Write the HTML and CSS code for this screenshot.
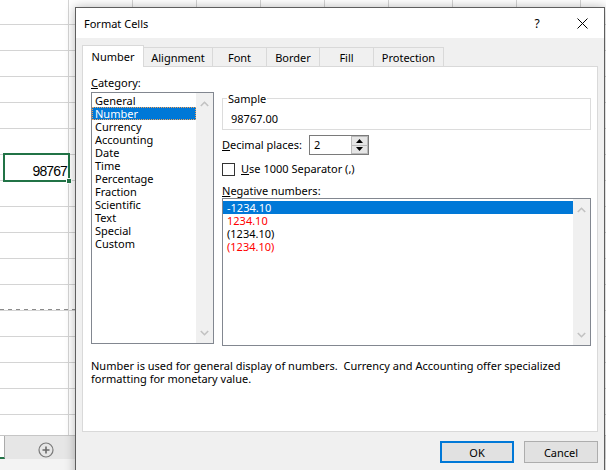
FILE: index.html
```html
<!DOCTYPE html>
<html>
<head>
<meta charset="utf-8">
<title>Format Cells</title>
<link rel="stylesheet" href="styles.css">
</head>
<body>
<div class="sheet">
  <div class="grid">
    <div class="cell-selected"><span>98767</span><i class="fill-handle"></i></div>
    <div class="page-break"></div>
  </div>
  <div class="sheet-tabs">
    <div class="sheet-tab-active"></div>
    <div class="add-sheet">
      <svg width="16" height="16" viewBox="0 0 16 16"><circle cx="8" cy="8" r="7" fill="none" stroke="#7a7a7a" stroke-width="1.2"/><path d="M8 4.5v7M4.5 8h7" stroke="#6a6a6a" stroke-width="1.6"/></svg>
    </div>
  </div>
  <div class="statusbar"></div>
</div>

<div class="dialog">
  <div class="titlebar">
    <div class="title">Format Cells</div>
    <div class="tb-btn help">?</div>
    <div class="tb-btn close">
      <svg width="11" height="11" viewBox="0 0 11 11"><path d="M0.5 0.5L10.5 10.5M10.5 0.5L0.5 10.5" stroke="#000" stroke-width="1"/></svg>
    </div>
  </div>
  <div class="dlg-body">
    <div class="tabs">
      <div class="tab active t-number">Number</div>
      <div class="tab t-align">Alignment</div>
      <div class="tab t-font">Font</div>
      <div class="tab t-border">Border</div>
      <div class="tab t-fill">Fill</div>
      <div class="tab t-prot">Protection</div>
    </div>
    <div class="panel">
      <div class="panel-main">
        <div class="col-left">
          <div class="label"><u>C</u>ategory:</div>
          <div class="listbox cat-list">
            <div class="list-items">
              <div class="item">General</div>
              <div class="item sel">Number</div>
              <div class="item">Currency</div>
              <div class="item">Accounting</div>
              <div class="item">Date</div>
              <div class="item">Time</div>
              <div class="item">Percentage</div>
              <div class="item">Fraction</div>
              <div class="item">Scientific</div>
              <div class="item">Text</div>
              <div class="item">Special</div>
              <div class="item">Custom</div>
            </div>
            <div class="scrollbar">
              <svg width="9" height="6" viewBox="0 0 9 6"><path d="M0.8 5L4.5 1.3L8.2 5" fill="none" stroke="#c2c2c2" stroke-width="1.6"/></svg>
              <svg width="9" height="6" viewBox="0 0 9 6"><path d="M0.8 1L4.5 4.7L8.2 1" fill="none" stroke="#c2c2c2" stroke-width="1.6"/></svg>
            </div>
          </div>
        </div>
        <div class="col-right">
          <div class="group">
            <span class="group-label">Sample</span>
            <div class="sample-value">98767.00</div>
          </div>
          <div class="dec-row">
            <div class="dec-label"><u>D</u>ecimal places:</div>
            <div class="spin-input">
              <div class="spin-value">2</div>
              <div class="spin-btns">
                <div class="spin-btn"><svg width="7" height="4" viewBox="0 0 7 4"><path d="M3.5 0L7 4H0z" fill="#000"/></svg></div>
                <div class="spin-btn"><svg width="7" height="4" viewBox="0 0 7 4"><path d="M0 0H7L3.5 4z" fill="#000"/></svg></div>
              </div>
            </div>
          </div>
          <div class="check-row">
            <div class="checkbox"></div>
            <div class="check-label"><u>U</u>se 1000 Separator (,)</div>
          </div>
          <div class="label neg-label"><u>N</u>egative numbers:</div>
          <div class="listbox neg-list">
            <div class="list-items">
              <div class="item sel-plain">-1234.10</div>
              <div class="item red">1234.10</div>
              <div class="item">(1234.10)</div>
              <div class="item red">(1234.10)</div>
            </div>
            <div class="scrollbar">
              <svg width="9" height="6" viewBox="0 0 9 6"><path d="M0.8 5L4.5 1.3L8.2 5" fill="none" stroke="#c2c2c2" stroke-width="1.6"/></svg>
              <svg width="9" height="6" viewBox="0 0 9 6"><path d="M0.8 1L4.5 4.7L8.2 1" fill="none" stroke="#c2c2c2" stroke-width="1.6"/></svg>
            </div>
          </div>
        </div>
      </div>
      <p class="description">Number is used for general display of numbers.&nbsp; Currency and Accounting offer specialized<br>formatting for monetary value.</p>
    </div>
    <div class="dlg-buttons">
      <button class="btn default">OK</button>
      <button class="btn">Cancel</button>
    </div>
  </div>
</div>
</body>
</html>
```

FILE: styles.css
```css
* { box-sizing: border-box; }

body {
  margin: 0;
  width: 606px;
  height: 470px;
  overflow: hidden;
  position: relative;
  background: #fff;
  color: #000;
  font-family: "Noto Sans", "Open Sans", sans-serif;
  font-size: 11px;
}

/* spreadsheet behind the dialog */
.sheet {
  display: flex;
  flex-direction: column;
  height: 470px;
}

.grid {
  position: relative;
  height: 435px;
  flex-shrink: 0;
  background-image:
    repeating-linear-gradient(to bottom, transparent 0 25px, #d4d4d4 25px 26px),
    repeating-linear-gradient(to right, transparent 0 63px, #d4d4d4 63px 64px);
  background-position: 0 -1px, 5px 0;
  background-size: 100% 100%, calc(100% - 5px) 100%;
  background-repeat: repeat, no-repeat;
}

.cell-selected {
  position: absolute;
  left: 3px;
  top: 153px;
  width: 67px;
  height: 29px;
  border: 2px solid #217346;
  background: #fff;
  display: flex;
  align-items: flex-end;
  justify-content: flex-end;
  padding-right: 1px;
  padding-bottom: 1px;
  font-family: "Liberation Sans", Arial, sans-serif;
  font-size: 14px;
  letter-spacing: -0.9px;
  line-height: 16px;
}

.fill-handle {
  position: absolute;
  right: -4px;
  bottom: -4px;
  width: 6px;
  height: 6px;
  background: #217346;
  border: 1px solid #fff;
}

.page-break {
  position: absolute;
  left: 0;
  top: 309px;
  width: 76px;
  height: 1px;
  background: repeating-linear-gradient(to right, #8c8c8c 0 4px, transparent 4px 8px);
}

.sheet-tabs {
  height: 24px;
  flex-shrink: 0;
  border-top: 1px solid #c6c6c6;
  background: #e6e6e6;
  display: flex;
}

.sheet-tab-active {
  width: 5px;
  background: #fff;
  border-right: 1px solid #ababab;
  border-bottom: 2px solid #217346;
}

.add-sheet {
  margin-left: 33px;
  padding-top: 6px;
}

.add-sheet svg { display: block; }

.statusbar {
  flex: 1;
  background: #f3f3f3;
}

/* dialog window */
.dialog {
  position: absolute;
  left: 75px;
  top: 7px;
  width: 530px;
  height: 480px;
  border: 1px solid #5e5e5e;
  background: #f0f0f0;
  box-shadow: 0 0 10px rgba(0, 0, 0, 0.28);
  display: flex;
  flex-direction: column;
}

.titlebar {
  height: 30px;
  flex-shrink: 0;
  background: #fff;
  display: flex;
  align-items: center;
  padding-left: 8px;
}

.title { flex: 1; }

.tb-btn {
  height: 30px;
  display: flex;
  align-items: center;
  justify-content: center;
}

.help { width: 46px; font-size: 12px; }
.close { width: 44px; }

.dlg-body {
  padding: 7px 6px 0 6px;
}

.tabs {
  display: flex;
  align-items: flex-end;
  height: 21px;
}

.tab {
  height: 19px;
  margin-left: -1px;
  border: 1px solid #d9d9d9;
  border-bottom: none;
  background: #f0f0f0;
  text-align: center;
  padding-top: 2px;
  line-height: 15px;
  white-space: nowrap;
}

.tab.active {
  height: 22px;
  margin-left: 0;
  margin-bottom: -1px;
  padding-top: 3px;
  background: #fff;
  position: relative;
  z-index: 1;
}

.t-number { width: 62px; }
.t-align { width: 70px; }
.t-font { width: 55px; }
.t-border { width: 54px; }
.t-fill { width: 55px; }
.t-prot { width: 71px; }

.panel {
  height: 366px;
  background: #fff;
  border: 1px solid #d9d9d9;
  padding: 8px 6px 0 8px;
}

.panel-main {
  display: flex;
  gap: 8px;
  align-items: flex-start;
}

.col-left { width: 123px; }

.col-right {
  flex: 1;
  padding-top: 23px;
}

.label {
  line-height: 15px;
  height: 15px;
  margin-bottom: 2px;
  white-space: nowrap;
}

.listbox {
  border: 1px solid #828790;
  background: #fff;
  display: flex;
}

.cat-list { height: 252px; }

.list-items {
  flex: 1;
  padding-top: 1px;
  min-width: 0;
}

.item {
  height: 13px;
  line-height: 13px;
  padding-left: 3px;
  white-space: nowrap;
}

.item.sel {
  background: #0078d7;
  color: #fff;
  outline: 1px dotted #f3a25a;
  outline-offset: -1px;
}

.item.sel-plain {
  background: #0078d7;
  color: #fff;
}

.item.red { color: #ff0000; }

.scrollbar {
  width: 17px;
  flex-shrink: 0;
  background: #f0f0f0;
  display: flex;
  flex-direction: column;
  justify-content: space-between;
  align-items: center;
  padding: 8px 0 7px;
}

.scrollbar svg { display: block; }

.group {
  position: relative;
  height: 32px;
  border: 1px solid #dcdcdc;
  padding: 12px 0 0 8px;
}

.group-label {
  position: absolute;
  top: -8px;
  left: 4px;
  padding: 0 1px;
  background: #fff;
  line-height: 15px;
}

.sample-value { line-height: 15px; }

.dec-row {
  display: flex;
  align-items: flex-start;
  margin-top: 5px;
}

.dec-label {
  width: 87px;
  margin-top: 2px;
  line-height: 15px;
  white-space: nowrap;
}

.spin-input {
  width: 60px;
  height: 20px;
  border: 1px solid #7a7a7a;
  display: flex;
  background: #fff;
}

.spin-value {
  flex: 1;
  padding-left: 4px;
  line-height: 18px;
}

.spin-btns {
  width: 17px;
  display: flex;
  flex-direction: column;
}

.spin-btn {
  flex: 1;
  background: #e5e5e5;
  border: 1px solid #b9b9b9;
  display: flex;
  align-items: center;
  justify-content: center;
}

.spin-btn + .spin-btn { border-top: none; }

.spin-btn svg { display: block; }

.check-row {
  display: flex;
  align-items: flex-start;
  margin-top: 5px;
}

.checkbox {
  width: 13px;
  height: 13px;
  margin-top: 3px;
  border: 1px solid #333;
  background: #fff;
}

.check-label {
  margin-left: 6px;
  margin-top: 1px;
  line-height: 15px;
}

.neg-label {
  margin-top: 6px;
  margin-bottom: 0;
  padding-top: 1px;
  height: 16px;
}

.neg-list { height: 148px; }

.neg-list .list-items { padding-top: 2px; }

.neg-list .item { padding-left: 4px; }

.description {
  margin: 13px 0 0;
  line-height: 13px;
  white-space: nowrap;
}

.dlg-buttons {
  display: flex;
  justify-content: flex-end;
  gap: 10px;
  margin-top: 9px;
}

.btn {
  width: 74px;
  height: 22px;
  padding: 0;
  border: 1px solid #adadad;
  background: #e1e1e1;
  color: #000;
  font-family: inherit;
  font-size: 11px;
  display: flex;
  align-items: center;
  justify-content: center;
}

.btn.default { border: 2px solid #0078d7; }
```
